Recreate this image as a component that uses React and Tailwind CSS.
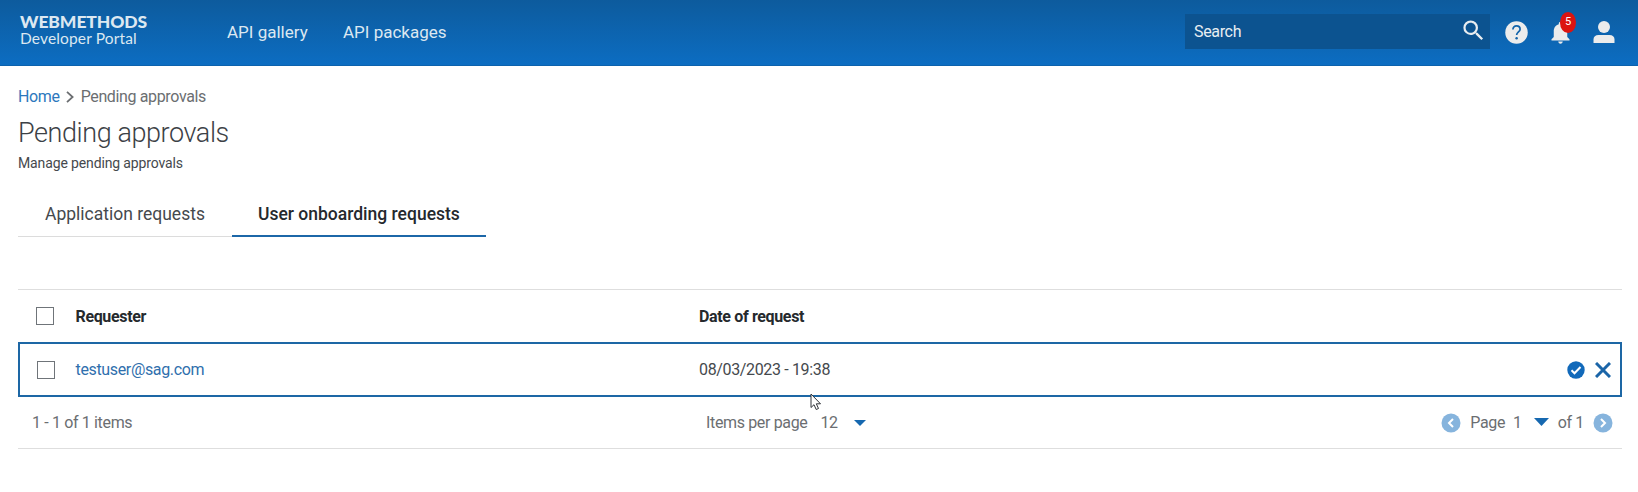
import React from "react";

function Checkbox({ className = "" }) {
  return <span role="checkbox" aria-checked="false" className={`block size-[18px] shrink-0 border border-[#6f7479] bg-white ${className}`} />;
}

function Header() {
  return (
    <header className="flex h-[66px] items-start border-b border-[#0c62ad] bg-linear-to-b from-[#0d5b9d] to-[#0c6dc2] text-[#dce8f1]">
      <div className="ml-5 w-[207px] pt-[11px] font-['Lato',sans-serif]">
        <div className="text-[17.5px] leading-[21px] font-black tracking-[-0.1px] whitespace-nowrap">WEBMETHODS</div>
        <div className="-mt-[3px] text-[15.5px] leading-[18px] tracking-[0.15px] whitespace-nowrap">Developer Portal</div>
      </div>
      <nav className="flex pt-5 text-[17px] leading-6">
        <a className="w-[116px] whitespace-nowrap">API gallery</a>
        <a className="whitespace-nowrap">API packages</a>
      </nav>
      <div className="mt-[14px] ml-auto flex h-[35px] w-[305px] items-center justify-between bg-[#0c5390] pr-[3px] pl-[9px] text-base tracking-[-0.34px] text-[#e8eef2]">
        <span className="pt-px">Search</span>
        <svg viewBox="0 0 24 24" className="mb-[3px] size-[27px]" fill="#e9edf0">
          <path d="M15.5 14h-.79l-.28-.27A6.47 6.47 0 0 0 16 9.5 6.5 6.5 0 1 0 9.5 16c1.61 0 3.09-.59 4.23-1.57l.27.28v.79l5 4.99L20.49 19l-4.99-5zm-6 0C7.01 14 5 11.99 5 9.5S7.01 5 9.5 5 14 7.01 14 9.5 11.99 14 9.5 14z" />
        </svg>
      </div>
      <svg viewBox="0 0 24 24" className="mt-[19px] ml-[13px] size-[27px]" fill="none">
        <circle cx="12" cy="12" r="10" fill="#ececec" />
        <path d="M8.800 9.300C8.800 7.300 10.200 6.100 12 6.100s3.200 1.200 3.200 3c0 2.300-3.100 2.500-3.100 5.200" stroke="#1263aa" strokeWidth="1.500" />
        <circle cx="12.100" cy="17.200" r="1.100" fill="#1263aa" />
      </svg>
      <div className="relative mt-[19px] ml-[17px] size-[27px]">
        <svg viewBox="0 0 24 24" className="size-[27px]" fill="#ececec">
          <path d="M12 22c1.1 0 2-.9 2-2h-4c0 1.1.89 2 2 2zm6-6v-5c0-3.07-1.64-5.64-4.5-6.32V4c0-.83-.67-1.5-1.5-1.5s-1.5.67-1.5 1.5v.68C7.63 5.36 6 7.92 6 11v5l-2 2v1h16v-1l-2-2z" />
        </svg>
        <span className="absolute -top-[7px] left-[13px] flex h-[21px] w-[16px] items-center justify-center rounded-[50%] bg-[#dc1410] pb-[2px] text-[11px] leading-none text-white">5</span>
      </div>
      <svg viewBox="0 0 22 22" className="mt-[21px] mr-[23px] ml-[19px] size-[22px]" fill="#ececec">
        <circle cx="11" cy="6" r="6" />
        <path d="M.5 22v-3.500c0-3 2-4.500 5-4.500h11c3 0 5 1.500 5 4.500V22z" />
      </svg>
    </header>
  );
}

export default function App() {
  return (
    <div className="h-[492px] w-[1638px] overflow-hidden bg-white font-['Roboto',sans-serif] text-[#45494d]">
      <Header />
      <main className="pr-4 pl-[18px]">
        <div className="flex items-center pt-[21px] text-base leading-5 tracking-[-0.36px] text-[#6b6e71]">
          <a className="text-[#2c78bd]">Home</a>
          <svg viewBox="0 0 8 12" className="mr-[7px] ml-[6px] h-[12px] w-[8px]" fill="none" stroke="#6b6e71" strokeWidth="1.800">
            <path d="M1 .8 6.600 6 1 11.200" />
          </svg>
          <span>Pending approvals</span>
        </div>
        <h1 className="mt-2 text-[27px] leading-9 font-light tracking-[-0.42px] text-[#3c4146]">Pending approvals</h1>
        <p className="mt-[2px] text-[14px] leading-5 tracking-[-0.13px]">Manage pending approvals</p>
        <div className="mt-[22px] flex items-end text-[17.5px] leading-6">
          <div className="h-[42px] w-[214px] border-b border-[#dcdcdc] pt-[7px] pl-[27px] whitespace-nowrap">Application requests</div>
          <div className="h-[42px] w-[254px] border-b-2 border-[#1c67a8] pt-[7px] pl-[26px] font-medium whitespace-nowrap text-[#25292d]">User onboarding requests</div>
        </div>
        <section className="mt-[52px] border-y border-[#dedede] text-base tracking-[-0.35px]">
          <div className="flex h-[52px] items-center pl-[18px] font-bold text-[#25292d]">
            <Checkbox />
            <span className="ml-[21.500px] w-[623.500px] pt-px">Requester</span>
            <span className="pt-px">Date of request</span>
          </div>
          <div className="flex h-[55px] items-center border-2 border-[#1d67a5] pr-[9px] pl-[17px]">
            <Checkbox />
            <a className="ml-[20.500px] w-[623.500px] text-[#2f6fad]">testuser@sag.com</a>
            <span>08/03/2023 - 19:38</span>
            <svg viewBox="0 0 18 18" className="ml-auto size-[18px]" fill="none">
              <circle cx="9" cy="9" r="8.700" fill="#1169ba" />
              <path d="m4.500 9.200 3 3 6-6.200" stroke="white" strokeWidth="2" />
            </svg>
            <svg viewBox="0 0 16 16" className="ml-[10px] size-[16px]" fill="none" stroke="#1b65a8" strokeWidth="3">
              <path d="m1 1 14 14M15 1 1 15" />
            </svg>
          </div>
          <div className="flex h-[51px] items-center pr-[9px] pl-[14px] text-[#6b6e71]">
            <span className="w-[674px]">1 - 1 of 1 items</span>
            <span>Items per page</span>
            <span className="ml-[13px]">12</span>
            <svg viewBox="0 0 12 6" className="ml-[16px] h-[6px] w-[12px]" fill="#1668b0"><path d="M0 0h12L6 6z" /></svg>
            <svg viewBox="0 0 20 20" className="ml-auto size-[20px]" fill="none">
              <circle cx="10" cy="10" r="9.500" fill="#86b4dd" />
              <path d="m12 6-4 4 4 4" stroke="white" strokeWidth="2" />
            </svg>
            <span className="ml-[9px]">Page</span>
            <span className="ml-[8px]">1</span>
            <svg viewBox="0 0 15 8" className="mb-[2px] ml-[12px] h-[8px] w-[15px]" fill="#1668b0"><path d="M0 0h15L7.500 8z" /></svg>
            <span className="ml-[9px]">of 1</span>
            <svg viewBox="0 0 20 20" className="ml-[9px] size-[20px]" fill="none">
              <circle cx="10" cy="10" r="9.500" fill="#86b4dd" />
              <path d="m8 6 4 4-4 4" stroke="white" strokeWidth="2" />
            </svg>
          </div>
        </section>
      </main>
      <svg viewBox="0 0 12 18" className="absolute top-[393px] left-[810px] h-[18px] w-[12px]" fill="white" stroke="#30343a" strokeWidth="1">
        <path d="M1 1v13.500l3-2.800 2.200 4.800 2.300-1-2.200-4.700h4.200z" />
      </svg>
    </div>
  );
}
